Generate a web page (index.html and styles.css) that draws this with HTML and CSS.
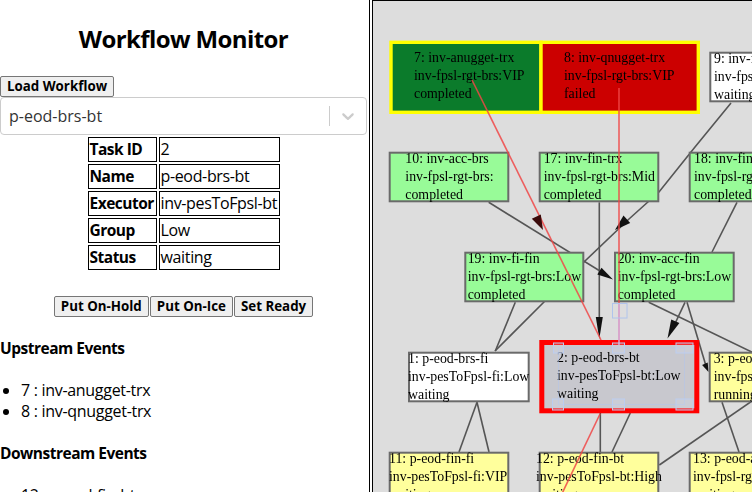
FILE: index.html
```html
<!DOCTYPE html>
<html>
<head>
<meta charset="utf-8">
<title>Workflow Monitor</title>
<link rel="stylesheet" href="styles.css">
</head>
<body>
<div class="app">
  <div class="sidebar">
    <h2 class="title">Workflow Monitor</h2>
    <button class="btn btn-block">Load Workflow</button>
    <div class="select">
      <div class="select-value">p-eod-brs-bt</div>
      <div class="select-indicators">
        <span class="select-sep"></span>
        <div class="select-arrow">
          <svg viewBox="0 0 20 20" aria-hidden="true"><path d="M4.516 7.548c0.436-0.446 1.043-0.481 1.576 0l3.908 3.747 3.908-3.747c0.533-0.481 1.141-0.446 1.574 0 0.436 0.445 0.408 1.197 0 1.615-0.406 0.418-4.695 4.502-4.695 4.502-0.217 0.223-0.502 0.335-0.787 0.335s-0.57-0.112-0.789-0.335c0 0-4.287-4.084-4.695-4.502s-0.436-1.170 0-1.615z"></path></svg>
        </div>
      </div>
    </div>
    <table class="info">
      <tr><th>Task ID</th><td>2</td></tr>
      <tr><th>Name</th><td>p-eod-brs-bt</td></tr>
      <tr><th>Executor</th><td>inv-pesToFpsl-bt</td></tr>
      <tr><th>Group</th><td>Low</td></tr>
      <tr><th>Status</th><td>waiting</td></tr>
    </table>
    <div class="actions">
      <button class="btn">Put On-Hold</button><button class="btn">Put On-Ice</button><button class="btn">Set Ready</button>
    </div>
    <h3 class="section">Upstream Events</h3>
    <ul class="events">
      <li>7 : inv-anugget-trx</li>
      <li>8 : inv-qnugget-trx</li>
    </ul>
    <h3 class="section">Downstream Events</h3>
    <ul class="events">
      <li>12 : p-eod-fin-bt</li>
    </ul>
  </div>
  <div class="graph">
    <svg class="canvas" viewBox="373 1 379 491" width="379" height="491">
      <g class="edges">
        <polyline points="731,103 695,147 659,192 629,219 585,261 544,302 495,351"/>
        <line x1="488.7" y1="202.3" x2="604" y2="273.5"/>
        <line x1="599.3" y1="202.3" x2="599.3" y2="330"/>
        <line x1="737" y1="202.3" x2="712" y2="252"/>
        <line x1="515.3" y1="302.3" x2="495.3" y2="351"/>
        <line x1="685" y1="302.3" x2="672" y2="330"/>
        <line x1="687" y1="302.3" x2="706" y2="366"/>
        <line x1="648.7" y1="302.3" x2="760" y2="356"/>
        <line x1="477" y1="402.3" x2="459" y2="452"/>
        <line x1="477" y1="402.3" x2="489" y2="452"/>
        <line x1="600.3" y1="413" x2="600.3" y2="452"/>
        <line x1="630.3" y1="413" x2="612" y2="452"/>
        <line x1="722" y1="402.3" x2="739" y2="452"/>
        <line x1="760" y1="395.5" x2="659.3" y2="465"/>
      </g>
      <g class="arrows">
        <polygon points="615,230 623.5,215.6 630.2,223"/>
        <polygon points="599.3,339 595.8,317 602.8,317"/>
        <polygon points="613,279.5 597.3,274.5 601.5,267.7"/>
        <polygon points="667.5,338.5 679.4,323 671.2,319.4"/>
        <polygon points="708.5,372 707.7,362.5 702.1,364.9"/>
      </g>

      <g class="node">
        <rect class="hl" x="391" y="42.3" width="150" height="70" fill="#0b7b2b"/>
        <text><tspan x="414" y="62.4">7: inv-anugget-trx</tspan><tspan x="414" y="80.4">inv-fpsl-rgt-brs:VIP</tspan><tspan x="414" y="98.4">completed</tspan></text>
      </g>
      <g class="node">
        <rect class="hl" x="541" y="42.3" width="157.3" height="70" fill="#cc0000"/>
        <text><tspan x="564" y="62.4">8: inv-qnugget-trx</tspan><tspan x="564" y="80.4">inv-fpsl-rgt-brs:VIP</tspan><tspan x="564" y="98.4">failed</tspan></text>
      </g>
      <g class="node">
        <rect class="box" x="710.3" y="52.7" width="118.6" height="48.6" fill="#ffffff"/>
        <text><tspan x="714" y="62.7">9: inv-fin-brs</tspan><tspan x="714" y="80.7">inv-fpsl-rgt-brs:VIP</tspan><tspan x="714" y="98.7">waiting</tspan></text>
      </g>

      <g class="node">
        <rect class="box" x="389.7" y="152.7" width="118.6" height="48.6" fill="#98fb98"/>
        <text><tspan x="405.3" y="162.7">10: inv-acc-brs</tspan><tspan x="405.3" y="180.7">inv-fpsl-rgt-brs:</tspan><tspan x="405.3" y="198.7">completed</tspan></text>
      </g>
      <g class="node">
        <rect class="box" x="539.7" y="152.7" width="118.6" height="48.6" fill="#98fb98"/>
        <text><tspan x="543.7" y="162.7">17: inv-fin-trx</tspan><tspan x="543.7" y="180.7">inv-fpsl-rgt-brs:Mid</tspan><tspan x="543.7" y="198.7">completed</tspan></text>
      </g>
      <g class="node">
        <rect class="box" x="689.7" y="152.7" width="118.6" height="48.6" fill="#98fb98"/>
        <text><tspan x="694" y="162.7">18: inv-fin-brs</tspan><tspan x="694" y="180.7">inv-fpsl-rgt-brs:Mid</tspan><tspan x="694" y="198.7">completed</tspan></text>
      </g>

      <g class="node">
        <rect class="box" x="465.3" y="252.7" width="118" height="48.6" fill="#98fb98"/>
        <text><tspan x="467.7" y="262.7">19: inv-fi-fin</tspan><tspan x="467.7" y="280.7">inv-fpsl-rgt-brs:Low</tspan><tspan x="467.7" y="298.7">completed</tspan></text>
      </g>
      <g class="node">
        <rect class="box" x="615" y="252.7" width="118.7" height="48.6" fill="#98fb98"/>
        <text><tspan x="617.7" y="262.7">20: inv-acc-fin</tspan><tspan x="617.7" y="280.7">inv-fpsl-rgt-brs:Low</tspan><tspan x="617.7" y="298.7">completed</tspan></text>
      </g>

      <g class="node">
        <rect class="box" x="409" y="352.7" width="119.7" height="48.6" fill="#ffffff"/>
        <text><tspan x="408" y="362.7">1: p-eod-brs-fi</tspan><tspan x="408" y="380.7">inv-pesToFpsl-fi:Low</tspan><tspan x="408" y="398.7">waiting</tspan></text>
      </g>
      <g class="node">
        <rect class="sel" x="541.8" y="342.5" width="155" height="68.3" fill="#c8c8ce"/>
        <text><tspan x="557" y="362.4">2: p-eod-brs-bt</tspan><tspan x="557" y="380.4">inv-pesToFpsl-bt:Low</tspan><tspan x="557" y="398.4">waiting</tspan></text>
      </g>
      <g class="node">
        <rect class="box" x="709.7" y="352.7" width="118.6" height="48.6" fill="#ffff9c"/>
        <text><tspan x="713.7" y="362.7">3: p-eod-acc-bt</tspan><tspan x="713.7" y="380.7">inv-fpsl-rgt-brs:Low</tspan><tspan x="713.7" y="398.7">running</tspan></text>
      </g>

      <g class="node">
        <rect class="box" x="389.7" y="452.7" width="118.6" height="48.6" fill="#ffff9c"/>
        <text><tspan x="389" y="462.7">11: p-eod-fin-fi</tspan><tspan x="389" y="480.7">inv-pesToFpsl-fi:VIP</tspan><tspan x="389" y="498.7">waiting</tspan></text>
      </g>
      <g class="node">
        <rect class="box" x="539.7" y="452.7" width="118.6" height="48.6" fill="#ffff9c"/>
        <text><tspan x="536" y="462.7">12: p-eod-fin-bt</tspan><tspan x="536" y="480.7">inv-pesToFpsl-bt:High</tspan><tspan x="536" y="498.7">waiting</tspan></text>
      </g>
      <g class="node">
        <rect class="box" x="689.7" y="452.7" width="118.6" height="48.6" fill="#ffff9c"/>
        <text><tspan x="693" y="462.7">13: p-eod-acc-fi</tspan><tspan x="693" y="480.7">inv-fpsl-rgt-brs:Low</tspan><tspan x="693" y="498.7">waiting</tspan></text>
      </g>

      <g class="red-edges">
        <line x1="472" y1="80" x2="601" y2="340"/>
        <line x1="619" y1="88" x2="619" y2="303"/>
        <line x1="600" y1="414" x2="558" y2="502"/>
      </g>
      <line class="pink-edge" x1="619" y1="303" x2="619" y2="345"/>
      <polygon class="red-arrow" points="543,230 531.8,218.8 540.8,214.4"/>

      <g class="handles">
        <rect class="frame" x="558.5" y="348" width="126" height="56.5"/>
        <rect x="553.5" y="343" width="10" height="10"/>
        <rect x="612.5" y="343" width="12" height="10"/>
        <rect x="676" y="343" width="17" height="10"/>
        <rect x="552.5" y="399" width="11" height="11"/>
        <rect x="612.5" y="399" width="12" height="11"/>
        <rect x="676" y="399" width="17" height="11"/>
        <rect class="edge-handle" x="612.5" y="303.5" width="14.5" height="14.5"/>
      </g>
    </svg>
  </div>
</div>
</body>
</html>
```

FILE: styles.css
```css
html, body {
  margin: 0;
  padding: 0;
}

body {
  font-family: "Open Sans", "Noto Sans", sans-serif;
  font-size: 16px;
  line-height: 21px;
  color: #000;
  background: #fff;
  overflow: hidden;
}

.app {
  display: flex;
  width: 752px;
  height: 492px;
  overflow: hidden;
}

.sidebar {
  flex: none;
  width: 367px;
  padding-right: 2px;
  border-right: 1px solid #000;
  height: 492px;
  overflow: hidden;
}

.title {
  margin: 23px 0 21px;
  font-size: 24px;
  line-height: 32px;
  font-weight: 700;
  letter-spacing: -0.6px;
  text-align: center;
}

.btn {
  font-family: inherit;
  font-size: 13.33px;
  font-weight: 700;
  line-height: 17px;
  height: 21px;
  padding: 1px 6px;
  margin: 0;
  border: 1px solid #767676;
  border-radius: 2px;
  background: #efefef;
  color: #000;
  box-sizing: border-box;
}

.btn-block {
  display: block;
}

.select {
  display: flex;
  align-items: center;
  box-sizing: border-box;
  height: 38px;
  border: 1px solid #ccc;
  border-radius: 4px;
  background: #fff;
}

.select-value {
  flex: 1;
  padding: 0 8px;
  color: #333;
}

.select-indicators {
  display: flex;
  align-items: center;
  align-self: stretch;
}

.select-sep {
  align-self: stretch;
  width: 1px;
  margin: 8px 0;
  background: #ccc;
}

.select-arrow {
  display: flex;
  padding: 8px;
}

.select-arrow svg {
  width: 20px;
  height: 20px;
  fill: #ccc;
}

.info {
  margin: 0 auto;
  border-spacing: 2px;
  table-layout: fixed;
  width: 196px;
}

.info th,
.info td {
  border: 1px solid #000;
  padding: 1px;
  text-align: left;
  line-height: 21px;
  white-space: nowrap;
  overflow: hidden;
}

.info th {
  width: 65px;
  font-size: 15.5px;
  font-weight: 700;
  letter-spacing: -0.5px;
}

.info td {
  width: 117px;
  letter-spacing: -0.35px;
}

.actions {
  display: flex;
  justify-content: center;
  gap: 1px;
  margin-top: 24px;
}

.section {
  margin: 21px 0;
  font-size: 15.5px;
  line-height: 21px;
  font-weight: 700;
  letter-spacing: -0.5px;
}

.events {
  margin: 21px 0;
  padding-left: 21px;
  letter-spacing: -0.3px;
}

.graph {
  flex: 1;
  margin-left: 2px;
  border-left: 1px solid #000;
  border-top: 1px solid #000;
  background: #dddddd;
  overflow: hidden;
}

.canvas {
  display: block;
  filter: blur(0.35px);
}

.edges line,
.edges polyline {
  fill: none;
  stroke: #555;
  stroke-width: 1.6;
}

.arrows polygon {
  fill: #111;
}

.node text {
  font-family: "Liberation Serif", "Times New Roman", serif;
  font-size: 13.85px;
  fill: #000;
}

.hl {
  stroke: #ffff00;
  stroke-width: 3.4;
}

.box {
  stroke: #6a6a6a;
  stroke-width: 2;
}

.sel {
  stroke: #ff0000;
  stroke-width: 5;
}

.red-edges line {
  stroke: #f04646;
  stroke-opacity: 0.85;
  stroke-width: 1.6;
}

.pink-edge {
  stroke: #d89ac8;
  stroke-width: 1.6;
}

.red-arrow {
  fill: #3a0a0a;
}

.handles rect {
  fill: rgba(215, 226, 248, 0.2);
  stroke: #bccdf0;
  stroke-width: 1;
}

.handles .frame {
  fill: none;
  stroke: rgba(175, 196, 238, 0.5);
}

.handles .edge-handle {
  fill: none;
  stroke: #b0c4ec;
}
```
